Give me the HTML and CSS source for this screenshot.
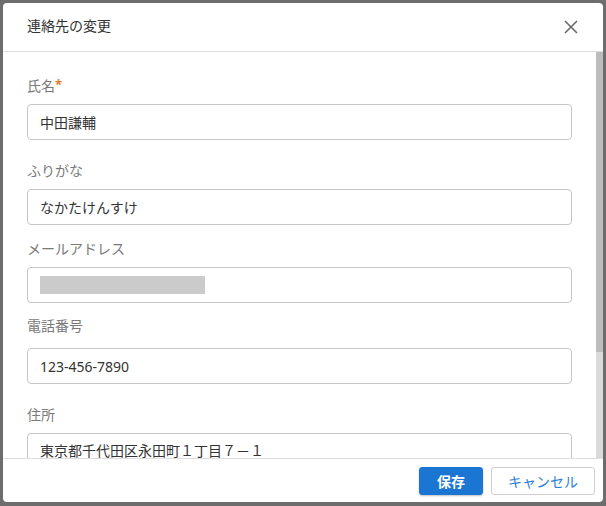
FILE: index.html
```html
<!DOCTYPE html>
<html lang="ja">
<head>
<meta charset="utf-8">
<title>連絡先の変更</title>
<link rel="stylesheet" href="styles.css">
</head>
<body>
<div class="modal">
  <div class="modal-header">
    <h1 class="modal-title">連絡先の変更</h1>
    <button class="close-btn" aria-label="閉じる">
      <svg width="14" height="14" viewBox="0 0 14 14"><path d="M1 1L13 13M13 1L1 13" stroke="#6a6a6a" stroke-width="1.6" fill="none"/></svg>
    </button>
  </div>
  <div class="modal-main">
    <div class="modal-body">
      <div class="field field-1">
        <label class="label">氏名<span class="req">*</span></label>
        <div class="input">中田謙輔</div>
      </div>
      <div class="field field-2">
        <label class="label">ふりがな</label>
        <div class="input">なかたけんすけ</div>
      </div>
      <div class="field field-3">
        <label class="label">メールアドレス</label>
        <div class="input"><span class="masked"></span></div>
      </div>
      <div class="field field-4">
        <label class="label">電話番号</label>
        <div class="input">123-456-7890</div>
      </div>
      <div class="field field-5">
        <label class="label">住所</label>
        <div class="input">東京都千代田区永田町１丁目７－１</div>
      </div>
    </div>
    <div class="scroll-rail"><div class="scroll-thumb"></div></div>
  </div>
  <div class="modal-footer">
    <button class="btn btn-primary">保存</button>
    <button class="btn btn-secondary">キャンセル</button>
  </div>
</div>
</body>
</html>
```
FILE: styles.css
```css
* { box-sizing: border-box; }
html, body { margin: 0; padding: 0; }
body {
  background: #6d6d6d;
  width: 606px;
  height: 506px;
  padding: 3px;
  font-family: "Noto Sans", "Noto Sans CJK JP", sans-serif;
  overflow: hidden;
}
.modal {
  width: 600px;
  height: 499px;
  background: #fff;
  border-radius: 4px;
  display: flex;
  flex-direction: column;
  overflow: hidden;
}
.modal-header {
  height: 49px;
  flex: none;
  border-bottom: 1px solid #dedede;
  display: flex;
  align-items: center;
  justify-content: space-between;
  padding: 0 25px 2px 24px;
}
.modal-title {
  margin: 0;
  font-size: 14px;
  font-weight: normal;
  color: #333;
  line-height: 20px;
}
.close-btn {
  border: 0;
  background: none;
  padding: 0;
  width: 14px;
  height: 14px;
  display: flex;
  margin-top: 2px;
}
.modal-main {
  flex: 1;
  min-height: 0;
  display: flex;
}
.modal-body {
  flex: 1;
  min-width: 0;
  overflow: hidden;
  padding: 24px 24px 0 24px;
}
.scroll-rail {
  width: 7px;
  flex: none;
  background: #dadada;
}
.scroll-thumb {
  height: 300px;
  background: #bdbdbd;
}
.label {
  display: block;
  font-size: 14px;
  line-height: 20px;
  color: #7a7a7a;
  margin-bottom: 8px;
}
.req {
  color: #e8772e;
  font-size: 13px;
  font-weight: bold;
  vertical-align: top;
  line-height: 16px;
}
.input {
  height: 36px;
  border: 1px solid #c6c6c6;
  border-radius: 4px;
  padding: 0 12px;
  display: flex;
  align-items: center;
  font-size: 14px;
  color: #333;
}
.masked {
  display: block;
  width: 165px;
  height: 18px;
  background: #cbcbcb;
}
.field-2 { margin-top: 21px; }
.field-3 { margin-top: 14px; }
.field-4 { margin-top: 13px; }
.field-4 .label { margin-bottom: 12px; }
.field-5 { margin-top: 21px; }
.field-5 .input { align-items: flex-start; padding-top: 10px; line-height: 14px; }
.modal-footer {
  flex: none;
  height: 44px;
  border-top: 1px solid #dedede;
  display: flex;
  justify-content: flex-end;
  align-items: flex-start;
  gap: 8px;
  padding: 8px 8px 0 0;
}
.btn {
  height: 28px;
  font-family: "Noto Sans CJK JP", sans-serif;
  font-size: 14px;
  border-radius: 3px;
  padding: 0;
  display: flex;
  align-items: center;
  justify-content: center;
}
.btn-primary {
  width: 64px;
  background: #1b76d3;
  border: 1px solid #1b76d3;
  color: #fff;
  font-weight: bold;
  box-shadow: 0 1px 2px rgba(0,0,0,0.25);
}
.btn-secondary {
  width: 104px;
  background: #fff;
  border: 1px solid #cfcfcf;
  color: #2b7fd5;
}
```
